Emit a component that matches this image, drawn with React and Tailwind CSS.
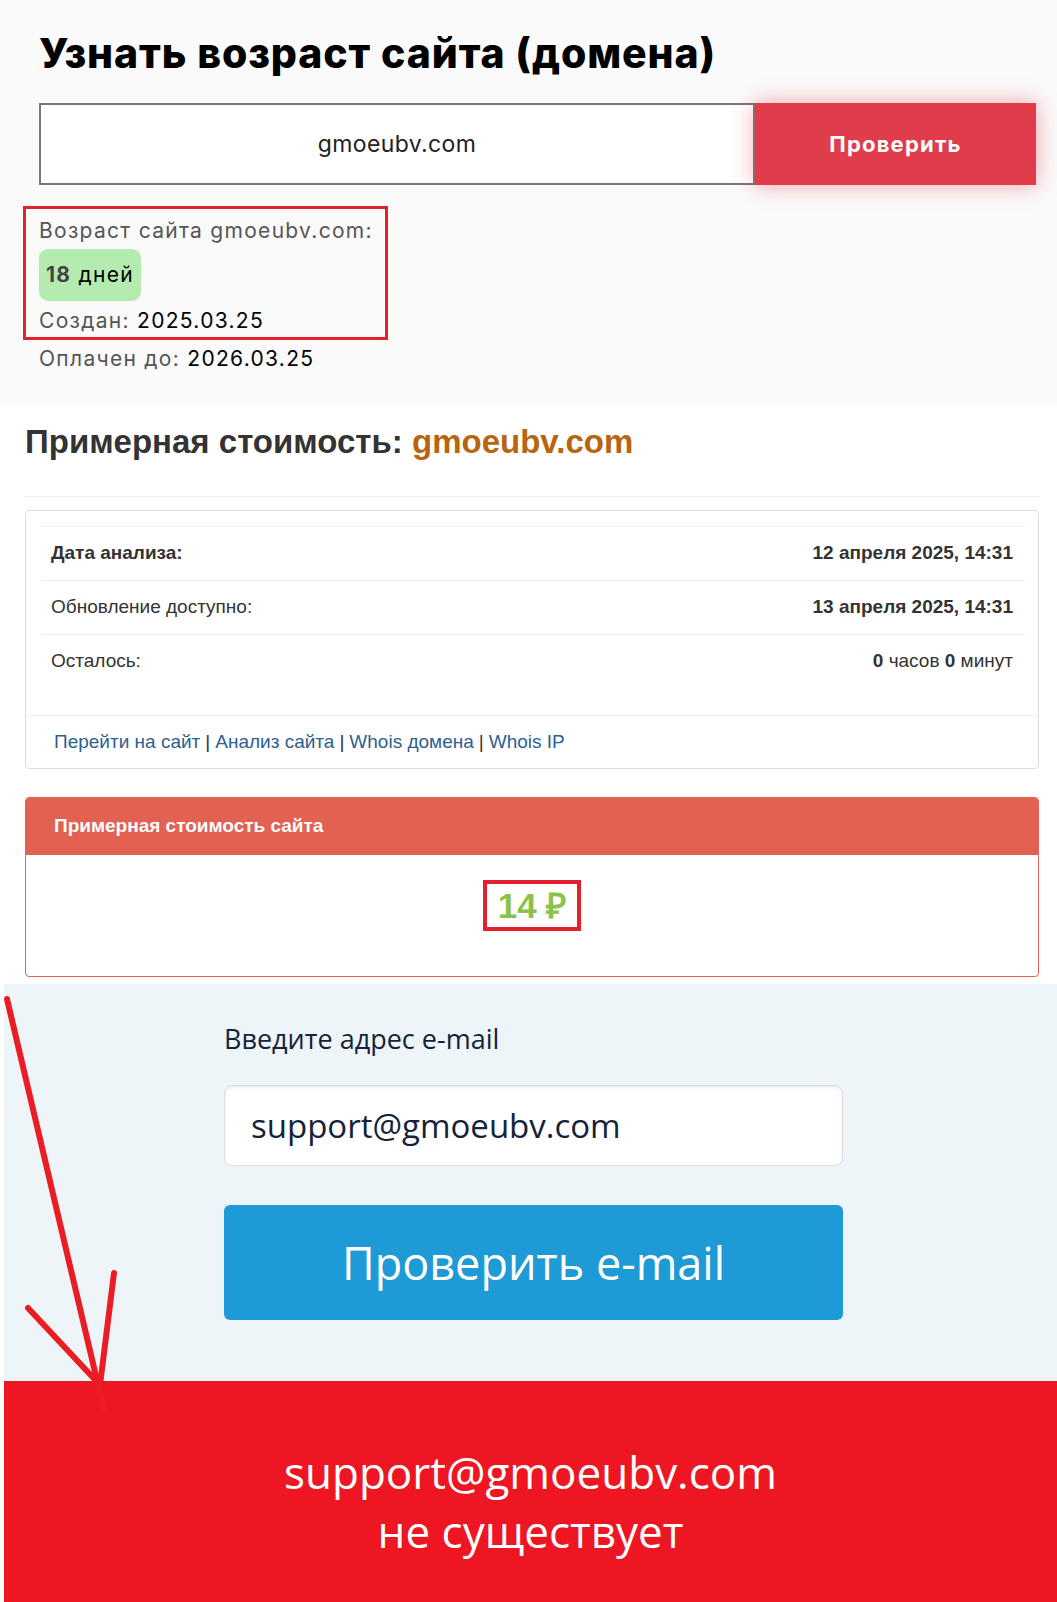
import React from "react";

const rows = [
  { label: "Дата анализа:", boldLabel: true, value: <b>12 апреля 2025, 14:31</b> },
  { label: "Обновление доступно:", value: <b>13 апреля 2025, 14:31</b> },
  {
    label: "Осталось:",
    value: (
      <>
        <b>0</b> часов <b>0</b> минут
      </>
    ),
  },
];

const links = ["Перейти на сайт", "Анализ сайта", "Whois домена", "Whois IP"];

export default function App() {
  return (
    <div className="relative w-[1057px] h-[1602px] overflow-hidden bg-white">
      {/* domain age */}
      <section className="h-[406px] bg-[#fafafa] pl-[39px] pt-[28px] font-['Inter',sans-serif]">
        <h1 className="text-[41px] leading-[50px] font-extrabold text-black tracking-[0.9px]">
          Узнать возраст сайта (домена)
        </h1>
        <div className="mt-[25px] flex h-[82px]">
          <div className="flex w-[716px] items-center justify-center border-2 border-[#777] bg-white text-[23px] tracking-[0.4px] text-[#222]">
            gmoeubv.com
          </div>
          <button className="w-[281px] bg-[#e03c4b] text-[22px] font-bold tracking-[1.2px] text-white shadow-[0_0_22px_rgba(230,60,75,0.45)]">
            Проверить
          </button>
        </div>
        <div className="relative mt-[33px] text-[21px] tracking-[1.3px] text-[#555]">
          <div className="absolute left-[-16px] top-[-12px] h-[134px] w-[365px] border-[3px] border-[#e3202e]" />
          <div className="leading-[26px]">Возраст сайта gmoeubv.com:</div>
          <div className="mt-[5px] inline-flex h-[52px] items-center rounded-[9px] bg-[#b4ecb0] px-[7px] text-black">
            <b className="text-[#444]">18</b>&nbsp;дней
          </div>
          <div className="mt-[7px] leading-[26px]">
            Создан: <span className="text-black">2025.03.25</span>
          </div>
          <div className="mt-[12px] leading-[26px]">
            Оплачен до: <span className="text-black">2026.03.25</span>
          </div>
        </div>
      </section>

      {/* estimated price */}
      <section className="bg-white pl-[25px] pr-[18px] pt-[16px] font-['Liberation_Sans',Arial,sans-serif] text-[#333]">
        <h2 className="text-[33px] font-bold leading-[40px] text-[#333]">
          Примерная стоимость: <span className="text-[#b8650f]">gmoeubv.com</span>
        </h2>
        <div className="mt-[34px] h-px bg-[#eee]" />
        <div className="mt-[13px] rounded-[4px] border border-[#ddd] pt-[15px]">
          <div className="ml-[15px] mr-[13px]">
            {rows.map((r) => (
              <div
                key={r.label}
                className="flex h-[54px] items-center justify-between border-t border-[#eee] pl-[10px] pr-[12px] text-[19px]"
              >
                <span className={r.boldLabel ? "font-bold" : ""}>{r.label}</span>
                <span>{r.value}</span>
              </div>
            ))}
          </div>
          <div className="mt-[27px] flex h-[53px] items-center border-t border-[#eee] pl-[28px] text-[19px] text-[#333]">
            {links.map((l, i) => (
              <React.Fragment key={l}>
                {i > 0 && <span className="mx-[5px]">|</span>}
                <span className="text-[#2d5f91]">{l}</span>
              </React.Fragment>
            ))}
          </div>
        </div>
        <div className="mt-[28px] rounded-[4px] border border-[#e36152]">
          <div className="flex h-[57px] items-center rounded-t-[3px] bg-[#e36152] pl-[28px] text-[19px] font-bold text-white">
            Примерная стоимость сайта
          </div>
          <div className="flex h-[121px] items-start justify-center pt-[25px]">
            <div className="border-[4px] border-[#e3202e] px-[11px] text-[35px] font-bold leading-[43px] text-[#8bc34a]">
              14 ₽
            </div>
          </div>
        </div>
      </section>

      {/* email check */}
      <section className="ml-[4px] mt-[7px] h-[397px] bg-[#eef5f9] pl-[220px] pt-[38px] font-['Open_Sans',sans-serif]">
        <div className="text-[27px] leading-[34px] text-[#15233a]">Введите адрес e-mail</div>
        <div className="mt-[29px] flex h-[81px] w-[619px] items-center rounded-[8px] border border-[#ddd] bg-white px-[26px] text-[33px] text-[#15233a] shadow-[inset_0_2px_3px_rgba(0,0,0,0.08)]">
          support@gmoeubv.com
        </div>
        <button className="mt-[39px] flex h-[115px] w-[619px] items-center justify-center rounded-[6px] bg-[#1e9ad6] text-[45px] text-white">
          Проверить e-mail
        </button>
      </section>

      <section className="ml-[4px] h-[222px] bg-[#ee1622] pt-[62px] text-center font-['Open_Sans',sans-serif] text-[44px] leading-[59px] text-white">
        <div>support@gmoeubv.com</div>
        <div>не существует</div>
      </section>

      {/* arrow annotation */}
      <svg
        className="absolute left-0 top-0 pointer-events-none"
        width="1057"
        height="1602"
        viewBox="0 0 1057 1602"
      >
        <g stroke="#ec1c24" strokeWidth="6" strokeLinecap="round" fill="none">
          <line x1="7" y1="999" x2="104" y2="1410" />
          <line x1="28" y1="1308" x2="100" y2="1385" />
          <line x1="114" y1="1273" x2="100" y2="1385" />
        </g>
      </svg>
    </div>
  );
}
